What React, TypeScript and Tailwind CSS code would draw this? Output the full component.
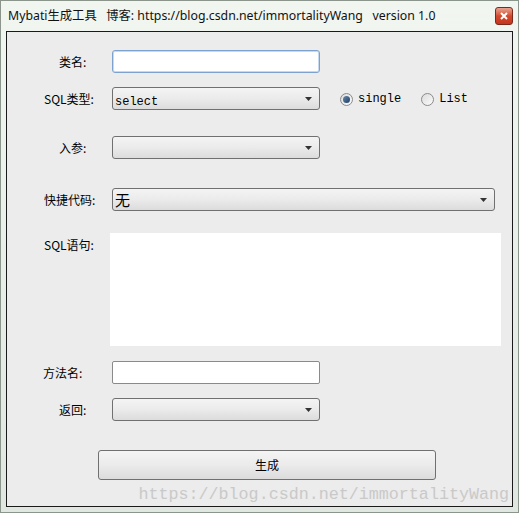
import React from "react";

const cjk = "font-['SimSun','Noto_Sans_CJK_SC',sans-serif]";

function Arrow() {
  return (
    <svg width="7" height="4" viewBox="0 0 7 4" className="flex-none">
      <path d="M0 0h7L3.5 4z" fill="#333" />
    </svg>
  );
}

function Combo({ w, children }: { w: string; children?: React.ReactNode }) {
  return (
    <div
      className={`flex h-[23px] ${w} items-center rounded-[3px] border border-[#707070] bg-gradient-to-b from-[#f4f4f4] via-[#ebebeb] to-[#dcdcdc] pl-[2px] pr-[7px]`}
    >
      <div className="min-w-0 flex-1">{children}</div>
      <Arrow />
    </div>
  );
}

function Label({ pl, children }: { pl: string; children: React.ReactNode }) {
  return (
    <div className={`w-[105px] flex-none ${pl} text-[12px] leading-none text-[#000] font-['Noto_Sans_CJK_SC',sans-serif]`}>
      {children}
    </div>
  );
}

function Radio({ checked, label }: { checked?: boolean; label: string }) {
  return (
    <div className="flex items-center gap-[5px]">
      <div className="flex h-[13px] w-[13px] items-center justify-center rounded-full border border-[#8a8a8a] bg-gradient-to-br from-[#dcdcdc] to-[#fbfbfb]">
        {checked && (
          <div className="h-[7px] w-[7px] rounded-full bg-gradient-to-br from-[#6a88aa] to-[#1c3e66]" />
        )}
      </div>
      <span className="font-['Liberation_Mono',monospace] text-[12px] text-black">{label}</span>
    </div>
  );
}

export default function App() {
  return (
    <div className="flex h-[513px] w-[519px] flex-col border border-[#8c958c] bg-gradient-to-b from-[#f1f6f1] to-[#dfe7e0] px-[5px] pb-[5px]">
      {/* Title bar */}
      <div className="flex h-[30px] flex-none items-center">
        <div className={`flex-1 pl-[2px] text-[12.3px] text-[#111] font-['Noto_Sans','Noto_Sans_CJK_SC',sans-serif]`}>
          Mybati生成工具&nbsp;&nbsp;&nbsp;博客: https://blog.csdn.net/immortalityWang&nbsp;&nbsp;&nbsp;version 1.0
        </div>
        <div className="mb-[1px] flex h-[18px] w-[18px] items-center justify-center rounded-[3px] border border-[#7a2a1c] bg-gradient-to-b from-[#e8a491] via-[#d2492e] to-[#c7351d]">
          <svg width="8" height="8" viewBox="0 0 8 8">
            <path d="M1 1l6 6M7 1L1 7" stroke="#fff" strokeWidth="2" />
          </svg>
        </div>
      </div>

      {/* Client area */}
      <div className="relative flex flex-1 flex-col border border-[#1a1a1a] bg-[#ececec]">
        <div className="mt-[18px] flex items-center">
          <Label pl="pl-[52px]">类名:</Label>
          <div className="h-[23px] w-[208px] rounded-[3px] border border-[#7da2ce] bg-white shadow-[inset_0_0_0_1px_#c5daf0]" />
        </div>

        <div className="mt-[14px] flex items-center">
          <Label pl="pl-[37px]">SQL类型:</Label>
          <Combo w="w-[208px]">
            <span className="font-['Liberation_Mono',monospace] text-[12px] text-black">select</span>
          </Combo>
          <div className="ml-[20px] mt-[1px] flex items-center gap-[20px]">
            <Radio checked label="single" />
            <Radio label="List" />
          </div>
        </div>

        <div className="mt-[26px] flex items-center">
          <Label pl="pl-[52px]">入参:</Label>
          <Combo w="w-[208px]" />
        </div>

        <div className="mt-[29px] flex items-center">
          <Label pl="pl-[37px]">快捷代码:</Label>
          <Combo w="w-[383px]">
            <span className={`${cjk} text-[15px] leading-none text-black`}>无</span>
          </Combo>
        </div>

        <div className="mt-[22px] flex items-start">
          <div className="pt-[6px]">
            <Label pl="pl-[37px]">SQL语句:</Label>
          </div>
          <div className="-ml-[2px] h-[113px] w-[391px] bg-white" />
        </div>

        <div className="mt-[15px] flex items-center">
          <Label pl="pl-[36px]">方法名:</Label>
          <div className="h-[23px] w-[208px] rounded-[2px] border border-[#8a8a8a] bg-white" />
        </div>

        <div className="mt-[14px] flex items-center">
          <Label pl="pl-[52px]">返回:</Label>
          <Combo w="w-[208px]" />
        </div>

        <div className="mt-[29px] pl-[91px]">
          <button className="flex h-[30px] w-[338px] items-center justify-center rounded-[3px] border border-[#707070] bg-gradient-to-b from-[#f4f4f4] via-[#ebebeb] to-[#dcdcdc] text-[12px] text-black font-['Noto_Sans_CJK_SC',sans-serif]">
            生成
          </button>
        </div>

        {/* watermark */}
        <div className="absolute bottom-[2px] right-[3px] font-['Liberation_Mono',monospace] text-[16.7px] leading-none text-[#c9c9c9]">
          https://blog.csdn.net/immortalityWang
        </div>
      </div>
    </div>
  );
}
